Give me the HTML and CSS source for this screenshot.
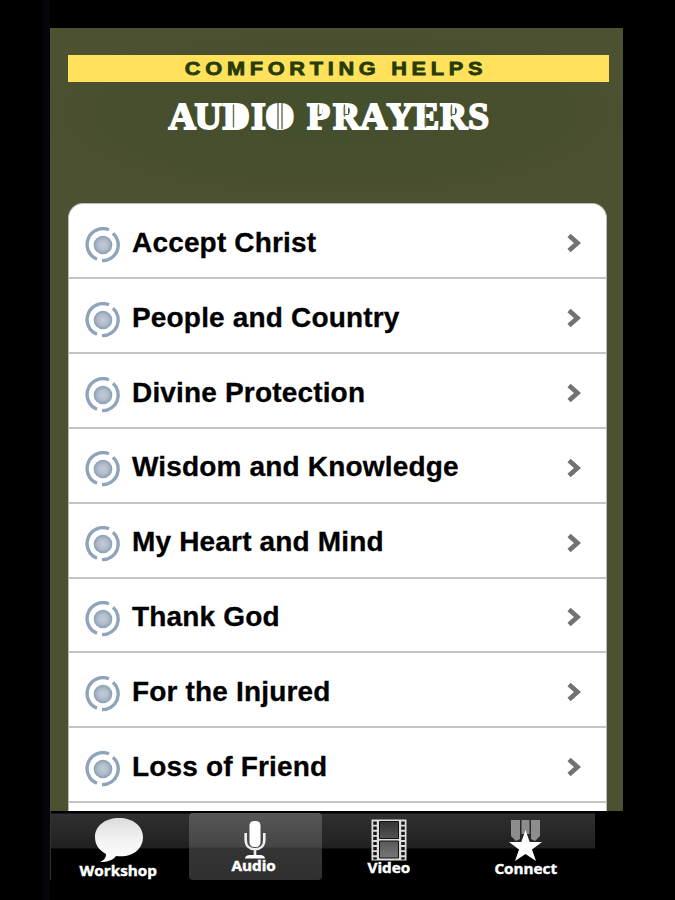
FILE: index.html
```
<!DOCTYPE html>
<html lang="en">
<head>
<meta charset="utf-8">
<title>Audio Prayers</title>
<link rel="stylesheet" href="styles.css">
</head>
<body>
<svg class="defs" aria-hidden="true">
  <defs>
    <radialGradient id="dot"><stop offset="0" stop-color="#c3cbd3"/><stop offset=".55" stop-color="#b0bdcb"/><stop offset="1" stop-color="#8b9db3"/></radialGradient>
    <linearGradient id="bubble" x2="0" y2="1"><stop offset="0" stop-color="#dcdcdc"/><stop offset=".5" stop-color="#f2f2f2"/><stop offset="1" stop-color="#fff"/></linearGradient>
    <linearGradient id="film" x2="0" y2="1"><stop offset="0" stop-color="#333"/><stop offset="1" stop-color="#777"/></linearGradient>
    <symbol id="target" viewBox="0 0 36 36"><g fill="none" stroke="#8fa3ba" stroke-width="3.4"><path d="M24 2.8A15.8 15.8 0 0 0 12 32.3"/><path d="M28 6.2A15.7 15.7 0 0 1 17 33.6"/></g><circle cx="18" cy="18" r="9.3" fill="url(#dot)"/></symbol>
    <symbol id="chevron" viewBox="0 0 14 20"><path d="M2 2.500l8.500 7.500L2 17.500" fill="none" stroke="#727272" stroke-width="4.800"/></symbol>
  </defs>
</svg>
<main class="screen">
  <header>
    <div class="band"><span>COMFORTING HELPS</span></div>
    <h1>
      <svg width="340" height="44" viewBox="0 0 340 44" aria-label="Audio Prayers">
        <text class="stencil" x="8.500 34.500 62.500 91 105 137 147 173 200 226.500 254 280 308" y="34.500">AUDIO PRAYERS</text>
        <g fill="#fff"><ellipse cx="119.500" cy="22" rx="8" ry="11"/><path d="M72 11h8l4 6v10l-4 6h-8zM158 11h4v9h-4zM184 11h4v9h-4zM291 11h4v9h-4z"/></g>
        <path class="cuts" d="M73.500 10.500v23M118 9v26M122 9v26M158.500 10.500v12M184.500 10.500v12M265.500 10.500v23M291.500 10.500v12"/>
      </svg>
    </h1>
  </header>
  <ul class="list">
    <li><svg class="target"><use href="#target"/></svg><span>Accept Christ</span><svg class="chevron"><use href="#chevron"/></svg></li>
    <li><svg class="target"><use href="#target"/></svg><span>People and Country</span><svg class="chevron"><use href="#chevron"/></svg></li>
    <li><svg class="target"><use href="#target"/></svg><span>Divine Protection</span><svg class="chevron"><use href="#chevron"/></svg></li>
    <li><svg class="target"><use href="#target"/></svg><span>Wisdom and Knowledge</span><svg class="chevron"><use href="#chevron"/></svg></li>
    <li><svg class="target"><use href="#target"/></svg><span>My Heart and Mind</span><svg class="chevron"><use href="#chevron"/></svg></li>
    <li><svg class="target"><use href="#target"/></svg><span>Thank God</span><svg class="chevron"><use href="#chevron"/></svg></li>
    <li><svg class="target"><use href="#target"/></svg><span>For the Injured</span><svg class="chevron"><use href="#chevron"/></svg></li>
    <li><svg class="target"><use href="#target"/></svg><span>Loss of Friend</span><svg class="chevron"><use href="#chevron"/></svg></li>
  </ul>
</main>
<nav class="tabs">
  <a class="workshop"><svg width="50" height="46" viewBox="0 0 50 46"><path d="M25 1C11 1 1 9 1 20c0 8 4 13 11 17 0 4-2 6-6 8 8 0 13-2 16-6 17 2 27-7 27-19C49 9 39 1 25 1z" fill="url(#bubble)"/></svg><span>Workshop</span></a>
  <a class="audio"><svg width="22" height="38" viewBox="0 0 22 38"><rect x="5.500" y="0" width="11" height="26" rx="4.500" fill="#fff"/><path d="M1.700 12v7c0 6 4 9.300 9.300 9.300s9.300-3.300 9.300-9.300v-7M11 28v7" fill="none" stroke="#eee" stroke-width="2.600"/><path d="M1 37.500c0-2 2-3.500 5-3.500h10c3 0 5 1.500 5 3.500z" fill="#fff"/></svg><span>Audio</span></a>
  <a class="video"><svg width="36" height="42" viewBox="0 0 36 42"><path d="M.5.5h35v41H.5z" fill="#ddd"/><path d="M8.500 2.500h19v17h-19zM8.500 22h19v17h-19z" fill="url(#film)" stroke="#111"/><path d="M4 2.500v38M32 2.500v38" stroke="#161616" stroke-width="3.500" stroke-dasharray="3.200 1.900"/></svg><span>Video</span></a>
  <a class="connect"><svg width="34" height="42" viewBox="0 0 34 42"><path d="M2 1h9v19l-4 2-5-5zM12.500 1h8v14h-8zM22 1h9v16l-5 5-4-2z" fill="#8d8d8d"/><path d="M16.500 11l4.200 12H33l-10 7.500 4 11.500-10.500-7L6 42l4-11.500L0 23h12.300z" fill="#fff"/></svg><span>Connect</span></a>
</nav>
</body>
</html>
```
FILE: styles.css
```
* { box-sizing: border-box; }
body { margin: 0; width: 675px; height: 900px; overflow: hidden; background: linear-gradient(90deg, #000 42px, #05060b 44px, #05060b 50px, #000 50px); font-family: "Liberation Sans", Arial, sans-serif; }
.defs { position: absolute; width: 0; height: 0; }
.screen { margin: 28px 0 0 50px; width: 573px; height: 783px; padding: 27px 14px 0 18px; overflow: hidden; background: radial-gradient(ellipse 300px 90px at 50% 85px, #434f2d, #484f2e 75%, #4b5131); }
header { height: 148px; }
.band { height: 27px; background: #ffe15b; color: #263b05; font-size: 19px; line-height: 28px; font-weight: bold; letter-spacing: 4.1px; text-align: center; padding-right: 5px; -webkit-text-stroke: .8px #263b05; }
.band span { display: inline-block; transform: scaleX(1.145); }
h1 { margin: 12px 0 0 92px; height: 44px; }
h1 svg { display: block; }
.stencil { font: bold 38px "Liberation Serif", serif; fill: #fff; stroke: #fff; stroke-width: 1.8px; }
.cuts { stroke: #66704f; stroke-width: 1.4px; }
.list { margin: 0; padding: 0; width: 539px; height: 640px; list-style: none; background: #fff; border: 1px solid #bbb; border-bottom: 0; border-radius: 15px 15px 0 0; }
.list li { height: 74.8px; display: flex; align-items: center; padding: 3px 25px 0 16px; border-bottom: 2px solid #c4c4c4; color: #000; }
.list li:first-child { height: 75.4px; }
.list span { flex: 1; margin: 1px 0 0 11px; font-size: 28px; font-weight: bold; letter-spacing: .17px; -webkit-text-stroke: .3px #000; }
.target { width: 36px; height: 36px; margin-top: 5px; }
.chevron { width: 14px; height: 20px; margin-top: 2px; }
.tabs { display: flex; margin-left: 50px; width: 545px; height: 69px; padding-top: 2px; border-left: 1px solid #333; background: linear-gradient(#000 0 2px, #303030 3px, #202020 37px, #000 38px); color: #fff; font: 700 13.5px "Open Sans", sans-serif; }
.tabs a { display: flex; flex-direction: column; align-items: center; width: 136px; line-height: 16px; -webkit-text-stroke: .4px #fff; }
.tabs span { transform: scaleX(1.13); }
.tabs .workshop { padding: 4px 1px 0 0; }
.tabs .audio { width: 133px; margin: 0 1px 0 2px; padding: 8px 2px 0 0; border-radius: 4px; background: linear-gradient(#575757, #454545 34px, #343434 35px, #303030); }
.tabs .audio span { margin: -1px 2px 0 0; }
.tabs .video { padding: 6px 4px 0 0; }
.tabs .video span { margin-top: -1px; }
.tabs .connect { padding: 6px 2px 0 0; }
```
